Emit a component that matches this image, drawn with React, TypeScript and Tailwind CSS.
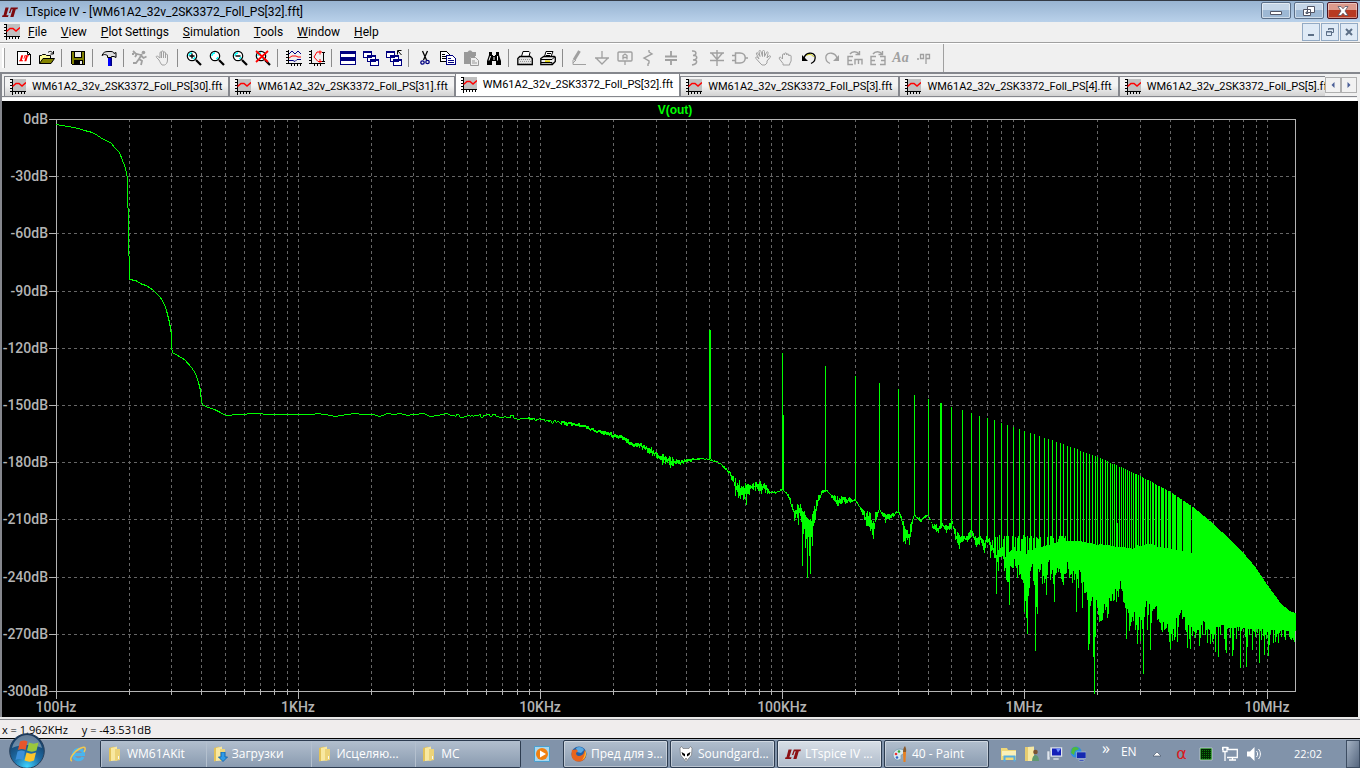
import { useState } from 'react';
import type { ReactNode } from 'react';

// ---------- plot geometry ----------
const LEFT = 56;
const RIGHT = 1295;
const TOP = 119;
const BOTTOM = 691;
const DECADE = 242.2;

const freqX = (hz: number) => Math.floor(LEFT + 0.1 + DECADE * Math.log10(hz / 100));
const dbY = (db: number) => Math.round(TOP + (-db * (BOTTOM - TOP)) / 300);

// repeatable noise, 0..1
const noise = (n: number) => {
  const s = Math.sin(n * 12.9898) * 43758.5453;
  return s - Math.floor(s);
};

const lerp = (points: number[][], x: number, col: number) => {
  for (let i = 1; i < points.length; i++) {
    const a = points[i - 1];
    const b = points[i];
    if (x <= b[0]) return a[col] + ((b[col] - a[col]) * (x - a[0])) / (b[0] - a[0]);
  }
  return points[points.length - 1][col];
};

const startCurve =
  '56,124 61,125 68,126 78,128 84,130 92,132 97,135 103,139 110,142 115,148 119,152 122,160 124,165 126,172 127,179 127,207 128,208 128,255 129,256 129,279 135,280 142,284 146,285 153,290 160,297 164,304 166,310 169,322 171,334 171,346 172,352 177,355 184,359 191,367 195,373 198,382 200,390 201,402 203,405 208,407 214,409 220,412 225,415';

// centre of the thin trace left of the noise
const thin = [
  [225, 415], [237, 414], [255, 413], [268, 414], [312, 414], [316, 413], [324, 414], [334, 416], [340, 415],
  [354, 413], [362, 414], [372, 414], [378, 416], [382, 415], [387, 413], [393, 414], [399, 413], [406, 415],
  [413, 414], [423, 413], [429, 416], [437, 415], [445, 413], [450, 415], [463, 417], [467, 413], [473, 416],
  [480, 415], [500, 416], [520, 418], [540, 420], [560, 422], [580, 425], [600, 431], [610, 433], [625, 439],
  [640, 446],
];

// x, upper edge, lower edge
const band = [
  [640, 444, 447], [650, 449, 453], [660, 455, 460], [670, 459, 464],
  [680, 461, 464], [690, 459, 461], [700, 458, 459], [709, 459, 460], [720, 463, 464], [730, 473, 476],
  [736, 483, 491], [740, 486, 496], [746, 486, 496], [750, 486, 491], [755, 484, 489], [762, 484, 490],
  [770, 491, 494], [776, 492, 493], [782, 489, 490], [788, 495, 497], [792, 505, 511], [795, 509, 519],
  [800, 508, 515], [803, 512, 530], [807, 520, 540], [811, 519, 540], [815, 507, 520], [818, 496, 502],
  [822, 491, 493], [826, 490, 491], [830, 494, 496], [836, 499, 504], [845, 498, 502], [855, 500, 501],
  [860, 507, 509], [865, 514, 522], [870, 518, 527], [873, 524, 537], [876, 513, 519], [879, 509, 510],
  [882, 513, 515], [887, 516, 521], [892, 514, 517], [898, 511, 512], [902, 520, 526], [905, 531, 542],
  [909, 531, 543], [912, 518, 522], [914, 515, 516], [920, 519, 522], [928, 514, 515], [933, 526, 530],
  [938, 527, 533], [941, 523, 525], [946, 527, 532], [952, 521, 526], [955, 532, 539], [959, 538, 546],
  [962, 535, 539], [966, 536, 542], [971, 529, 533], [976, 538, 546], [980, 536, 541], [984, 543, 552],
  [987, 534, 540], [991, 545, 553], [994, 549, 556], [996, 555, 566], [999, 548, 560], [1002, 547, 555],
  [1006, 560, 574], [1009, 552, 575], [1014, 547, 560], [1018, 554, 568], [1021, 550, 570], [1025, 556, 590],
  [1028, 550, 585], [1031, 551, 564], [1035, 548, 590], [1039, 548, 564], [1043, 546, 574], [1048, 545, 562],
  [1053, 544, 572], [1058, 541, 564], [1063, 541, 572], [1067, 541, 562], [1071, 541, 572], [1076, 541, 580],
  [1080, 541, 572], [1084, 542, 584], [1088, 543, 600], [1091, 543, 592], [1095, 544, 612], [1097, 545, 598],
  [1100, 544, 612], [1104, 545, 608], [1109, 545, 604], [1113, 546, 590], [1117, 547, 594], [1120, 547, 586],
  [1124, 547, 596], [1128, 548, 612], [1133, 549, 614], [1137, 545, 628], [1141, 546, 620], [1145, 544, 606],
  [1150, 544, 612], [1154, 545, 604], [1158, 547, 608], [1163, 548, 622], [1168, 548, 632], [1174, 549, 628],
  [1181, 551, 610], [1187, 552, 624], [1193, 553, 630], [1199, 555, 630], [1203, 558, 620], [1209, 565, 630],
  [1215, 575, 628], [1221, 585, 624], [1228, 590, 628], [1240, 600, 627], [1250, 605, 629], [1260, 610, 629],
  [1272, 614, 630], [1295, 614, 631],
];

// long downward spikes, x and lower end
const dips = [
  [670, 468], [662, 465], [746, 505], [743, 500], [735, 496], [761, 494], [802, 566], [807, 578], [810, 574],
  [805, 548], [809, 556], [812, 546], [798, 525], [864, 520], [885, 523], [903, 542], [905, 544], [996, 594],
  [1009, 605], [1006, 580], [1017, 578], [1024, 612], [1025, 601], [1026, 618], [1027, 634], [1035, 651],
  [1036, 607], [1037, 614], [1046, 595], [1054, 602], [1050, 580], [1062, 582], [1076, 612], [1082, 608],
  [1088, 650], [1089, 644], [1093, 657], [1094, 694], [1095, 637], [1099, 622], [1102, 620], [1108, 614],
  [1126, 639], [1129, 631], [1137, 644], [1140, 641], [1143, 674], [1147, 630], [1150, 650], [1161, 630],
  [1169, 642], [1170, 649], [1172, 641], [1174, 640], [1177, 642], [1187, 648], [1190, 649], [1195, 638],
  [1199, 646], [1207, 643], [1210, 644], [1215, 652], [1218, 657], [1225, 650], [1226, 653], [1232, 656],
  [1233, 650], [1240, 668], [1246, 667], [1247, 647], [1252, 650], [1259, 663], [1264, 655], [1268, 656],
  [1269, 645], [1273, 643], [1278, 638], [1290, 639], [1293, 640],
];

// envelope of the harmonic peaks
const peaks = [
  [709, 330], [782, 353], [825, 366], [855, 376], [879, 383], [898, 389], [914, 395], [928, 399], [941, 403],
  [952, 407], [971, 413], [987, 418], [1024, 431], [1060, 443], [1097, 457], [1120, 467], [1140, 476], [1170, 492],
  [1194, 508], [1213, 524], [1229, 539], [1243, 553], [1255, 567], [1267, 585], [1280, 603], [1289, 611], [1295, 613],
];

const buildSpectrum = () => {
  let d = '';
  const column = (x: number, y1: number, y2: number, w = 1) => {
    d += `M${x} ${Math.round(y1)}h${w}V${Math.max(Math.round(y2), Math.round(y1) + 1)}h-${w}z`;
  };
  let prev = 415;
  for (let x = 225; x < 640; x++) {
    let y = lerp(thin, x, 1);
    if (x > 455) y += (noise(Math.floor(x / (x < 520 ? 3 : 1))) - 0.5) * (x < 520 ? 4 : 3.4);
    y = Math.round(y);
    column(x, Math.min(y, prev), Math.max(y, prev) + (x > 600 ? 2 : 1) - (y === prev ? 0 : 1) + (x > 560 ? 1 : 0));
    prev = y;
  }
  for (let x = 640; x <= RIGHT; x++) {
    let upper = lerp(band, x, 1);
    let lower = lerp(band, x, 2);
    // join steep parts with the next column
    const next = lerp(band, x + 1, 1);
    if (next > lower) lower = next;
    const thick = lower - upper;
    if (x < 960) {
      const amp = Math.min(9, thick);
      upper += (noise(x) - 0.6) * amp;
      lower += (noise(x + 71) - 0.5) * amp;
    } else {
      lower += (noise(x + 13) - 0.35) * (x < 990 ? 5 : 20);
      if (x < 1066 && noise(x * 3) > 0.5) upper = 535 + noise(x) * 5;
    }
    column(x, upper, lower);
  }
  dips.forEach(([x, y]) => column(x, lerp(band, x, 1), y));
  for (let k = 1; k <= 262; k++) {
    const x = Math.min(freqX(50000 * k), RIGHT);
    column(x, lerp(peaks, x, 1), lerp(band, x, 2), k === 9 ? 2 : 1);
  }
  for (let x = 1192; x <= RIGHT; x++) column(x, lerp(peaks, x, 1), lerp(band, x, 2));
  column(710, 330, 459);
  column(783, 415, 491);
  column(1063, 499, 545);
  column(1117, 523, 550);
  return d;
};

const spectrum = buildSpectrum();

const minorX: number[] = [];
for (let decade = 100; decade <= 1e7; decade *= 10) {
  for (let m = 1; m < 10; m++) {
    const x = freqX(decade * m);
    if (x > LEFT && x < RIGHT) minorX.push(x);
  }
}
const dbValues = [0, -30, -60, -90, -120, -150, -180, -210, -240, -270, -300];
const decades: [number, string][] = [
  [1e2, '100Hz'], [1e3, '1KHz'], [1e4, '10KHz'], [1e5, '100KHz'], [1e6, '1MHz'], [1e7, '10MHz'],
];

function Plot() {
  return (
    <svg viewBox="2 101 1356 616" className="block h-full w-full bg-black" role="img" aria-label="FFT of V(out)">
      <g shapeRendering="crispEdges">
        <g stroke="#666666" strokeDasharray="3 3" fill="none">
          {minorX.map((x) => <path key={x} d={`M${x + 0.5} ${TOP}V${BOTTOM}`} />)}
          {dbValues.slice(1, -1).map((db) => <path key={db} d={`M${LEFT} ${dbY(db) + 0.5}H${RIGHT}`} />)}
        </g>
        <g stroke="#b4b4b4" fill="none">
          <path d={`M${LEFT + 0.5} ${TOP + 0.5}H${RIGHT + 0.5}V${BOTTOM + 0.5}H${LEFT + 0.5}z`} />
          {dbValues.map((db) => <path key={db} d={`M49 ${dbY(db) + 0.5}H${LEFT}`} />)}
          {minorX.map((x) => <path key={x} d={`M${x + 0.5} 689V695`} />)}
          {decades.map(([hz]) => <path key={hz} d={`M${freqX(hz) + 0.5} ${BOTTOM}V699`} />)}
        </g>
        <polyline points={startCurve} transform="translate(.5 .5)" fill="none" stroke="#00ff00" />
        <path d={spectrum} fill="#00ff00" />
      </g>
      <g fill="#b4b4b4" className="font-['Roboto',sans-serif] text-[14px] font-medium">
        {dbValues.map((db) => <text key={db} x="48" y={dbY(db) + 5} textAnchor="end">{db}dB</text>)}
        {decades.map(([hz, label]) => <text key={hz} x={freqX(hz)} y="712" textAnchor="middle">{label}</text>)}
      </g>
      <text x="675" y="114" textAnchor="middle" fill="#00ff00" className="font-['Liberation_Sans',sans-serif] text-[12px] font-bold">V(out)</text>
    </svg>
  );
}

// ---------- icons ----------
function Ico({ children, size = 'size-4' }: { children: ReactNode; size?: string }) {
  return <svg viewBox="0 0 16 16" fill="none" aria-hidden="true" className={`${size} shrink-0`}>{children}</svg>;
}

const LtMark = ({ color = '#7d0a0f' }) => (
  <path fill={color} d="M3.500 3.500h3.200L4.400 11.200h2.200L6 13H0l.500-1.800h1zM8.800 3.500H16l-.600 1.700h-1.600L11.500 13H8.300l2.400-7.800H9.600L8.300 9H6.900z" />
);
const GraphIcon = () => (
  <Ico>
    <path fill="#c0c0c0" d="M2 0h14v12H2z" />
    <path shapeRendering="crispEdges" stroke="#000" d="M0 .5h2M0 3.500h2M0 6.500h2M0 9.500h2M2.500 0v16M0 12.500h16M5.500 13v2M8.500 13v2M11.500 13v2M14.500 13v2" />
    <path stroke="#f00" strokeWidth="1.500" d="M2.500 7.500 6 4.500l3 0 3 2.500L16 3.500" />
  </Ico>
);
const Glass = ({ children }: { children?: ReactNode }) => (
  <Ico>
    <circle cx="6" cy="6" r="4.700" fill="#fff" stroke="#000" strokeWidth="1.200" />
    <path stroke="#0ff" strokeWidth="1.300" d="M3 6a3 3 0 0 1 3-3M7 9a3 3 0 0 0 2-2" />
    <path stroke="#000" strokeWidth="2.200" d="m10 10 5 5" />
    {children}
  </Ico>
);
const Cascade = ({ arrow = false }) => (
  <Ico>
    <g fill="#fff" stroke="#000080" shapeRendering="crispEdges">
      <path d="M.5 1.500h8v6h-8zM4.500 5.500h8v6h-8zM7.500 9.500h8v6h-8z" />
      <path strokeWidth="2" d="M1 2h8M4 6h9M7 10h9" />
    </g>
    {arrow && <path stroke="#000" d="M11.500 4.500V.5h4M12 1l3.500 4" />}
  </Ico>
);
const GRAY = '#a0a0a0';

const tools: (null | [string, ReactNode])[] = [
  ['New schematic', <Ico><path fill="#fff" stroke="#000" shapeRendering="crispEdges" d="M1.500 1.500h10l3 3v10h-13z" /><path stroke="#000" d="M11.500 1.500v3h3" /><g transform="translate(3 3) scale(.64)"><LtMark color="#f00" /></g></Ico>],
  ['Open', <Ico><path fill="#ffff9c" stroke="#000" d="M.5 13.500v-8h2l1-1h3l1 1h4v3" /><path fill="#848400" stroke="#000" d="M.5 13.500 4 8.500h11.500L12 13.500z" /><path stroke="#000" d="M9 2.500c2-2 4-1 5 1M14.500 1v3h-3" /></Ico>],
  null,
  ['Save', <Ico><g shapeRendering="crispEdges"><path fill="#808000" stroke="#000" d="M1.500 1.500h13v13h-12l-1-1z" /><path fill="#eee" stroke="#000" d="M4.500 1.500h7v6h-7z" /><path fill="#000" d="M4 10h9v5H4z" /><path fill="#eee" d="M10 11h2v3h-2z" /></g></Ico>],
  null,
  ['Control panel', <Ico><path fill="#ddd" stroke="#000" d="M1 5.500C2 2.500 4 1.500 7 1.500h3c2 0 3 1 3 2l2-1v5l-2-1H10.500v1h-4v-2C4 4 2.500 4.500 1 5.500z" /><path fill="#00f" d="M7 8h4v8H7z" /><path fill="#000080" d="M9.500 8H11v8H9.500z" /></Ico>],
  null,
  ['Run', <Ico><circle cx="11.500" cy="2.500" r="1.800" fill={GRAY} /><path stroke={GRAY} strokeWidth="1.800" d="m10 4-3 5 3 2-1 4M7 9l-3 4H1M9 5 5 4 3 7M9.500 6l2 2 3-1.500M1 1l3 3M0 4h2" /></Ico>],
  ['Halt', <Ico><path stroke={GRAY} d="M4 10 1.500 7.500c-1-1 .5-2 1.500-1L5 8V3c0-1.500 1.500-1.500 1.500 0V2c0-1.500 2-1.500 2 0v1c0-1.500 2-1.500 2 0v2c0-1.500 2-1 2 0v5c0 3-1.500 4.500-3 5H7c-1-1-2-3-3-5zM6.500 3v5M8.500 3v5M10.500 4v4" /></Ico>],
  null,
  ['Zoom in', <Glass><path stroke="#000" strokeWidth="1.400" d="M3.500 6h5M6 3.500v5" /></Glass>],
  ['Pan', <Glass />],
  ['Zoom out', <Glass><path stroke="#000" strokeWidth="1.400" d="M3.500 6h5" /></Glass>],
  ['Zoom full extents', <Glass><path stroke="#f00" strokeWidth="1.800" d="m1 1 12 11M13 1 1 12" /></Glass>],
  null,
  ['Autorange', <Ico><path shapeRendering="crispEdges" stroke="#000" d="M2.500 0v14M0 13.500h16M0 1.500h2M0 4.500h2M0 7.500h2M0 10.500h2M5.500 14v2M8.500 14v2M11.500 14v2M14.500 14v2" /><path stroke="#000080" d="m3 4 3-3 3 3 3-3 3 3M3 10.500h4l2 1 2-2h4" /><path stroke="#f00" d="m3 8 3-2h4l2 1h3" /></Ico>],
  ['Axis setup', <Ico><path shapeRendering="crispEdges" stroke="#000" d="M2.500 0v14M0 13.500h16M0 1.500h2M0 4.500h2M0 7.500h2M0 10.500h2M5.500 14v2M8.500 14v2M11.500 14v2M14.500 2v10M13 2.500h3M13 11.500h3" /><path stroke="#f00" d="M13 2H8L5 7l4 4.500h4M11 .5v4M11 9v4" /></Ico>],
  null,
  ['Tile windows', <Ico><g shapeRendering="crispEdges"><path fill="#fff" stroke="#000080" d="M.5 1.500h15v6H.5zM.5 8.500h15v6H.5z" /><path fill="#000080" d="M0 1h16v3H0zM0 8h16v3H0z" /></g></Ico>],
  ['Cascade windows', <Cascade />],
  ['Close all windows', <Cascade arrow />],
  null,
  ['Cut', <Ico><path stroke="#000" strokeWidth="1.300" d="m5.500 1 4 9M10.500 1l-4 9" /><g stroke="#000080" strokeWidth="1.300"><circle cx="5.500" cy="12.500" r="1.700" /><circle cx="10.500" cy="12" r="1.700" /></g></Ico>],
  ['Copy', <Ico><g shapeRendering="crispEdges" fill="#fff"><path stroke="#000" d="M.5 1.500h6l3 3v7h-9zM2 4.500h3M2 6.500h5M2 8.500h5" /><path stroke="#000080" d="M6.500 5.500h6l3 3v6h-9zM8 8.500h3M8 10.500h6M8 12.500h6" /></g></Ico>],
  ['Paste', <Ico><path fill="#999" d="M1 2h3.500L6 .5h2L9.500 2H13v4h-1V4H4v2h3v8H1z" /><path fill="#999" d="M2 3h10v4H7v7H2z" /><path fill="#eee" stroke="#999" d="M7.500 7.500h5l3 3v5h-8zM9 11h3M9 13h5" /></Ico>],
  ['Find', <Ico><path fill="#000" d="M3 2h3v3h1v1h2V5h1V2h3v3l2 6v4h-5v-4H6v4H1v-4l2-6z" /><path stroke="#fff" d="M4.500 6 3 10.500M11.500 6v4.500M8 7v3" /></Ico>],
  null,
  ['Print setup', <Ico><path fill="#fff" stroke="#000" d="M4.500 6.500 6 1.500h6l1 1-1 4" /><path fill="#e4e4e4" stroke="#000" strokeWidth="1.300" d="m.8 8.500 2-2h10.500l2 2v6H.8z" /><path stroke="#999" strokeDasharray="1 1" d="M2 9.500h12M3 11.500h12M2 13.500h12" /></Ico>],
  ['Print', <Ico><path fill="#fff" stroke="#000" d="M4.500 6.500 6 1.500h7l-2 5M7 3.500h4M6 5.500h4" /><path fill="#eee" stroke="#000" strokeWidth="1.300" d="m.8 8.500 3-2h10.500l1 1v4l-3 3H.8z" /><path stroke="#000" d="M1 9.500h11l3-3M1 12.500h11v2" /><path stroke="#e0d000" strokeWidth="1.500" d="M5 11.200h5" /></Ico>],
  null,
  ['Wire', <Ico><path stroke={GRAY} strokeWidth="3" d="M8.500 1 3 10" /><path stroke={GRAY} d="M2 10v4.500h13M2 13l3-3" /></Ico>],
  ['Ground', <Ico><path stroke={GRAY} strokeWidth="1.300" d="M8 1v7M1 8h14M2.500 8.500 8 14l5.500-5.500" /></Ico>],
  ['Label net', <Ico><rect x="1" y="2" width="14" height="9" rx="1" stroke={GRAY} strokeWidth="1.400" /><path stroke={GRAY} strokeWidth="1.300" d="M8 11v4M6 9.500V5.500l2-1.500 2 1.500v4M6 7.500h4" /></Ico>],
  ['Resistor', <Ico><path stroke={GRAY} strokeWidth="1.400" d="M9 0v2l3 2-8 4 5 3v2l-1 1v2" /></Ico>],
  ['Capacitor', <Ico><path stroke={GRAY} strokeWidth="1.800" d="M8 1v5M2 6.500h12M2 10h12M8 10v5" /></Ico>],
  ['Inductor', <Ico><path stroke={GRAY} strokeWidth="1.500" d="M6 1c5-.5 5 4 1 4.500 5-.5 5 4 0 4.500 5-.5 5 4-1 5" /></Ico>],
  ['Diode', <Ico><path stroke={GRAY} strokeWidth="1.400" d="M8 0v16M1 3h14M2.500 3 8 9.500 13.500 3M1 10.500h14" /></Ico>],
  ['Component', <Ico><path stroke={GRAY} strokeWidth="1.500" d="M3.500 3H8c7 0 7 10 0 10H3.500zM0 5.500h3M0 10.500h3M13 8h3" /></Ico>],
  ['Move', <Ico><path stroke={GRAY} d="M5 13 1 8.500C0 7 1.500 6.500 2.500 7.500L4 9 1.500 4c-.5-1.500 1-2 1.500-.5l2 3-1-5c0-1.500 1.500-1.500 2 0l1.500 5V1.500c0-1.500 2-1.500 2 0v5l2-4c.5-1.500 2-.5 1.500 1L12 8l2-2c1.500-1 2 .5 1 1.500L12 11v2l-2 2H7z" /></Ico>],
  ['Drag', <Ico><path stroke={GRAY} d="M5 13.500 1.500 9C.5 7.500 2 6.500 3 7.500L4.500 9V5c0-1.500 2-1.500 2 0V4c0-1.500 2.200-1.500 2.200 0v1c0-1.500 2.200-1.500 2.200 0v1c0-1.200 2.200-1 2.200 0v5l-1.500 3v1H5z" /></Ico>],
  ['Undo', <Ico><path stroke="#000" strokeWidth="1.300" d="M3 8c2-6 9-6 11-2 1 4-1 6-4 7.500" /><path fill="#000" d="M1 5v6h6z" /><path stroke="#cc0" d="M5.500 5.500c3-2 6-1 7 1.500" /></Ico>],
  ['Redo', <Ico><path stroke={GRAY} strokeWidth="1.300" d="M13 8C11 2 4 2 2 6c-1 4 1 6 4 7.500" /><path fill={GRAY} d="M15 5v6H9z" /></Ico>],
  ['Rotate', <Ico><path stroke={GRAY} strokeWidth="1.400" d="M6 6.500H1v8h5M1 10.500h4M8 14.500v-5h7v5M11.500 10v4M3 4c2-3 7-3 9 0M12.500 1v3.500h-4" /></Ico>],
  ['Mirror', <Ico><path stroke={GRAY} strokeWidth="1.400" d="M6 6.500H1v8h5M1 10.500h4M10 6.500h5v8h-5M15 10.500h-4M3 4c2-3 7-3 9 0M12.500 1v3.500h-4" /></Ico>],
  ['Text', <span className="font-['Liberation_Serif',serif] text-[14px] leading-4 font-bold italic text-[#a0a0a0]">Aa</span>],
  ['SPICE directive', <Ico><path stroke={GRAY} strokeWidth="1.300" d="M4.500 4.500h3v4h-3zM10 14V4.500h3.500v4H10M1 9h2" /></Ico>],
];

const Folder = () => (
  <Ico>
    <path fill="#e2c25a" d="M2 2 7 .5V14L2 15.500z" />
    <path fill="#f8e8a0" d="m4 2 6-1.500v14L4 15z" />
    <path fill="#ecd378" d="M8 3h5v11l-5 1z" />
    <path fill="#f8f8f0" d="M11 10h1v3h-1z" />
  </Ico>
);

const folderTasks: [string, ReactNode][] = [
  ['WM61AKit', <Folder />],
  ['Загрузки', <span className="relative flex"><Folder /><svg viewBox="0 0 10 10" className="absolute right-0 bottom-0 size-[10px]"><path fill="#2e9be8" stroke="#1468b0" d="M3 0h4v5h2.500L5 9.500.5 5H3z" /></svg></span>],
  ['Исцеляю...', <Folder />],
  ['MC', <Folder />],
];

const appTasks: [string, ReactNode][] = [
  ['Пред для э...', <Ico><circle cx="8" cy="8" r="7.500" fill="#1f5fa8" /><path fill="#5aa8e0" d="M5 2c3-2 7-1 8 2l-3 3-4-1z" /><path fill="#e8641b" d="M1 3c0 1 1 1 2 1 2-1 3 0 4 1L5 7c0 3 3 4 6 2 2-1 2-3 2-5 3 4 2 9-2 11C6 17 0 14 .5 8z" /><path fill="#ffb52c" d="M14 4c2 4 1 8-3 10 2-3 3-5 3-10z" /></Ico>],
  ['Soundgard...', <Ico><path fill="#fff" stroke="#555" strokeWidth=".5" d="M2 2 3.500.5 5 2.500h6L12.500.5 14 2l-.5 7L8 15.500 2.500 9z" /><path fill="#000" d="m3.500 6 3.500 2v2.500L4.500 9zM12.500 6 9 8v2.500L11.500 9zM7 12.500h2L8 14z" /></Ico>],
  ['LTspice IV ...', <Ico><LtMark color="#8c1014" /></Ico>],
  ['40 - Paint', <Ico><path fill="#d7e8ef" stroke="#7f9fb0" d="M1 9c0-4 4-6 7-6s5 2 4 4-3 1-3 3 1 3-2 4-6-2-6-5z" /><circle cx="4" cy="8" r="1.300" fill="#e33" /><circle cx="7" cy="5.500" r="1.300" fill="#3a3" /><circle cx="5" cy="11.500" r="1.300" fill="#36c" /><path fill="#e8801f" d="M11 6h3l-.5 10h-2z" /><path fill="#8a5a2c" d="M11 6c0-3 1-5 2-6 1 2 1.500 4 1 6z" /></Ico>],
];

const menus = ['File', 'View', 'Plot Settings', 'Simulation', 'Tools', 'Window', 'Help'];
const tabs = ['[30]', '[31]', '[32]', '[3]', '[4]', '[5]'];

export default function App() {
  const [active, setActive] = useState('[32]');

  return (
    <div className="flex min-h-screen flex-col bg-[#f0f0f0] font-['Open_Sans','Noto_Sans',sans-serif] text-[11px] text-black">
      {/* title bar */}
      <header className="flex h-[22px] shrink-0 items-center border-t border-[#333a45] bg-linear-to-b from-[#98b4d2] to-[#b9d1ea] pl-[2px] pr-[2px]">
        <Ico><LtMark /></Ico>
        <h1 className="ml-2 flex-1 font-['Roboto',sans-serif] text-[12px] leading-4">LTspice IV - [WM61A2_32v_2SK3372_Foll_PS[32].fft]</h1>
        <div className="flex gap-[3px] self-start pt-px">
          <button aria-label="Minimize" className="flex h-[17px] w-[30px] items-center justify-center rounded-[2px] border border-[#5b6f88] bg-linear-to-b from-[#c5d6e8] from-50% to-[#9db8d4] to-50% inset-ring inset-ring-white/50">
            <svg viewBox="0 0 12 12" className="size-3"><path fill="#fff" stroke="#535666" d="M.5 6.500h11v3H.5z" /></svg>
          </button>
          <button aria-label="Restore" className="flex h-[17px] w-[30px] items-center justify-center rounded-[2px] border border-[#5b6f88] bg-linear-to-b from-[#c5d6e8] from-50% to-[#9db8d4] to-50% inset-ring inset-ring-white/50">
            <svg viewBox="0 0 12 12" className="size-3"><path fill="#fff" stroke="#535666" d="M4.500 1.500h7v6h-7zM.5 4.500h7v6h-7z" /><path fill="#9db8d4" stroke="#535666" d="M3 7h2v1.500H3z" /></svg>
          </button>
          <button aria-label="Close" className="flex h-[17px] w-[31px] items-center justify-center rounded-[2px] border border-[#4a1420] bg-linear-to-b from-[#dc9a8c] from-50% to-[#b83a22] to-50% inset-ring inset-ring-white/40">
            <svg viewBox="0 0 12 12" className="size-3"><path fill="#fff" stroke="#535666" strokeWidth=".8" d="M1 1.500h3l2 2.300 2-2.300h3L8 6l3 4.500H8L6 8.200 4 10.500H1L4 6z" /></svg>
          </button>
        </div>
      </header>

      {/* menu */}
      <nav className="flex h-[21px] shrink-0 items-center border-b border-[#a0a0a0] pl-1 pr-[2px]">
        <GraphIcon />
        <ul className="flex flex-1 gap-[14px] pl-[8px] font-['Roboto',sans-serif] text-[12px] leading-4">
          {menus.map((m) => (
            <li key={m}><button><span className="underline">{m[0]}</span>{m.slice(1)}</button></li>
          ))}
        </ul>
        <div className="flex gap-px">
          <button aria-label="Minimize document" className="flex h-[18px] w-[18px] items-center justify-center border border-[#93aac4] bg-[#dfeaf6]"><svg viewBox="0 0 10 10" className="size-[10px]"><path fill="#5c6f87" d="M2 7h6v2H2z" /></svg></button>
          <button aria-label="Restore document" className="flex h-[18px] w-[18px] items-center justify-center border border-[#93aac4] bg-[#dfeaf6]"><svg viewBox="0 0 10 10" className="size-[10px]"><path fill="none" stroke="#5c6f87" d="M3.500 3V1.500h5v4H7M1.500 4.500h5v4h-5zM1 5h6M3 2h6" /></svg></button>
          <button aria-label="Close document" className="flex h-[18px] w-[18px] items-center justify-center border border-[#93aac4] bg-[#dfeaf6]"><svg viewBox="0 0 10 10" className="size-[10px]"><path stroke="#5c6f87" strokeWidth="2" d="m2 2 6 6M8 2 2 8" /></svg></button>
        </div>
      </nav>

      {/* toolbar */}
      <div className="flex h-[31px] shrink-0 border-t border-b-2 border-t-white border-b-[#85878d]">
        <div className="my-1 ml-[2px] w-[3px] border-r border-[#a0a0a0] bg-white" />
        <div className="flex items-center border-r border-[#a0a0a0] pl-[7px] pr-[8px]">
          {tools.map((t, i) =>
            t ? (
              <button key={t[0]} aria-label={t[0]} className="flex h-[22px] w-[23px] items-center justify-center">{t[1]}</button>
            ) : (
              <span key={i} className="ml-[3px] mr-1 h-[18px] w-px bg-[#8c8c8c]" />
            ),
          )}
        </div>
      </div>

      {/* document tabs */}
      <div className="flex h-[27px] shrink-0 flex-col border-l-2 border-[#85878d] pr-[3px]">
        <div className="flex h-[23px] items-end overflow-hidden border-b border-[#85878d] pl-[2px]">
          <div role="tablist" className="flex min-w-0 flex-1 items-end overflow-hidden">
            {tabs.map((t) => (
              <button
                key={t}
                role="tab"
                aria-selected={t === active}
                onClick={() => setActive(t)}
                className={`flex shrink-0 items-center gap-[6px] border-l border-r border-t border-[#85878d] pl-[5px] pr-[6px] font-['Roboto',sans-serif] text-[11px] leading-4 whitespace-nowrap ${
                  t === active ? 'h-[23px] bg-white' : 'h-[20px] bg-linear-to-b from-[#f3f3f3] from-45% to-[#d2d2d2]'
                }`}
              >
                <GraphIcon />
                WM61A2_32v_2SK3372_Foll_PS{t}.fft
              </button>
            ))}
          </div>
          <div className="flex self-center">
            <button aria-label="Scroll tabs left" className="flex h-4 w-4 items-center justify-center border border-[#b0b0b0] bg-[#f2f2f2]"><svg viewBox="0 0 6 6" className="size-[6px]"><path fill="#4a5f97" d="M4.500 0v6l-3-3z" /></svg></button>
            <button aria-label="Scroll tabs right" className="flex h-4 w-4 items-center justify-center border border-[#b0b0b0] bg-[#f2f2f2]"><svg viewBox="0 0 6 6" className="size-[6px]"><path fill="#4a5f97" d="M1.500 0v6l3-3z" /></svg></button>
          </div>
        </div>
        <div className="flex-1 border-t border-[#f0f0f0] bg-white" />
      </div>

      <main className="min-h-0 flex-1 basis-0 border-l-2 border-r-2 border-l-[#85878d] border-r-[#f0f0f0] bg-black">
        <Plot />
      </main>

      {/* cursor readout */}
      <footer className="flex h-[22px] shrink-0 flex-col border-t-2 border-b border-t-[#e8e8e8] border-b-black bg-[#f0eded]">
        <p className="flex flex-1 gap-[14px] border-t border-[#85878d] pl-[2px] text-[11px] leading-5">
          <span>x = 1.962KHz</span>
          <span>y = -43.531dB</span>
        </p>
      </footer>

      {/* taskbar */}
      <div className="relative flex h-[29px] shrink-0 items-stretch border-t border-[#a9b5c5] bg-[#8193aa] text-[12px] text-white">
        <button aria-label="Start" className="absolute -top-[7px] left-[9px] size-9">
          <svg viewBox="0 0 36 36" className="size-9">
            <defs>
              <radialGradient id="orb" cx=".5" cy=".95" r=".9">
                <stop offset="0" stopColor="#3fd4ff" />
                <stop offset=".45" stopColor="#1d6ca5" />
                <stop offset="1" stopColor="#14365c" />
              </radialGradient>
            </defs>
            <circle cx="18" cy="18" r="17.300" fill="url(#orb)" stroke="#28405c" />
            <path fill="#fff" opacity=".35" d="M3 15C5 6 12 2 18 2s13 4 15 13c-8-4-22-4-30 0z" />
            <path fill="#e8562a" d="M11 8.500c3-1.500 5-1.500 7.500 0L16.500 17c-2.500-1.500-4.500-1.500-7.500 0z" />
            <path fill="#9bc83c" d="M20 9.500c3 1.500 6 1.500 9.500 0L27.500 17.500c-3 1.500-6 1.500-9.500 0z" />
            <path fill="#3c8fd8" d="M8.500 18.500c3-1.500 5-1.500 7.500 0L14 27c-2.500-1.500-4.500-1.500-7.500 0z" />
            <path fill="#fbc52c" d="M17.500 19.500c3 1.500 6 1.500 9.500 0L25 27.500c-3 1.500-6 1.500-9.500 0z" />
          </svg>
        </button>
        <button aria-label="Internet Explorer" className="ml-[55px] flex w-[45px] items-center justify-center">
          <svg viewBox="0 0 18 18" className="size-[18px]" fill="none">
            <path stroke="#49b5ee" strokeWidth="3" d="M4.500 9.500h10c0-7-10-7-10 0s8 6 9.500 2.500" />
            <path stroke="#f0c850" strokeWidth="1.500" d="M3 16c-4-1 2-10 9-13 5-2 5 1 3 4" />
          </svg>
        </button>
        <div className="flex w-[421px] rounded-[2px] border border-[#2d3c50]">
          {folderTasks.map(([name, icon]) => (
            <button key={name} className="flex min-w-0 flex-1 items-center gap-1 border-l border-[#b4c0ce] bg-linear-to-b from-[#b2bfce] to-[#8a9bb0] pl-[5px] whitespace-nowrap">
              {icon}
              {name}
            </button>
          ))}
        </div>
        <button aria-label="Media player" className="flex w-[42px] items-center justify-center">
          <Ico><path fill="#a8d8f0" stroke="#4aa0d0" d="M.5.5h15v15H.5z" /><circle cx="8" cy="8" r="6" fill="#f08010" /><path fill="#fff" d="M6 4.500v7L12 8z" /></Ico>
        </button>
        <div className="flex gap-[2px]">
          {appTasks.map(([name, icon]) => (
            <button
              key={name}
              className={`flex w-[105px] items-center gap-1 rounded-[2px] border border-[#2d3c50] pl-[7px] whitespace-nowrap inset-ring inset-ring-white/40 bg-linear-to-b ${
                name.startsWith('LTspice') ? 'from-[#d8dfe7] to-[#b0bccb]' : 'from-[#b2bfce] to-[#8a9bb0]'
              }`}
            >
              {icon}
              {name}
            </button>
          ))}
        </div>
        <div className="flex flex-1 items-center">
          <div className="flex gap-[7px] pl-3">
            <button aria-label="Explorer"><Ico><path fill="#f0d878" d="M0 2h6l1 2h8v10H0z" /><path fill="#fbf0b8" d="M1 5h14v5H1z" /><path fill="none" stroke="#56aee0" strokeWidth="2" d="M3.500 15.500V10.500h10v5" /></Ico></button>
            <button aria-label="User folder"><Ico><path fill="#e6cc70" d="M1 1h6v14H1z" /><path fill="#f6e8a4" d="m4 1 6-.5V15H4z" /><circle cx="11.500" cy="6" r="2.300" fill="#7a5230" /><path fill="#5f9870" d="M8 15c0-8 7-8 7 0z" /></Ico></button>
            <button aria-label="Computer"><Ico><path fill="#dfe6ee" stroke="#8592a5" strokeWidth=".6" d="M3 1h12.500v10H3zM0 5h3v9H0zM6 12h6v2H6z" /><path fill="#1420b8" d="M5 2.500h9v7H5z" /><path fill="#6f90ff" d="M9 2.500h5l-3 4z" /></Ico></button>
            <button aria-label="Network places"><Ico><circle cx="6" cy="6" r="5.500" fill="#2f8fe0" /><path fill="#4cba3c" d="M2 2.500C5 0 8 1 9 3L5 5 4 9 1 7z" /><path fill="#1528b0" stroke="#bcd" strokeWidth=".6" d="M6.500 6H16v6.500H6.500zM9 13.500h5v1.500H9z" /></Ico></button>
          </div>
          <button aria-label="More toolbar items" className="ml-[16px] -mt-3 text-[16px] leading-4">»</button>
          <button className="ml-[11px] -mt-1">EN</button>
          <button aria-label="Show hidden icons" className="ml-[15px]"><svg viewBox="0 0 10 6" className="h-[6px] w-[10px]"><path fill="#fff" stroke="#3c4c60" strokeWidth=".6" d="m5 1 4 4H1z" /></svg></button>
          <div className="flex items-center gap-2 pl-3">
            <span className="w-4 text-center font-['DejaVu_Sans',sans-serif] text-[16px] leading-4 text-[#d81a20]">α</span>
            <Ico>
              <path fill="#0a7a0a" stroke="#dfe8df" strokeWidth=".6" d="M2 2h12v12H2z" />
              <path stroke="#022802" shapeRendering="crispEdges" d="M3 3.500h10M3 5.500h10M3 7.500h10M3 9.500h10M3 11.500h10M3.500 3v10M5.500 3v10M7.500 3v10M9.500 3v10M11.500 3v10" />
            </Ico>
            <Ico><path stroke="#fff" strokeWidth="1.300" d="M6 3.500h9.300v8H5M7 14h7M10.500 12v2M1 1.500h4v4H1zM3 6v9M0 1v3M6 1v3" /></Ico>
            <Ico><path fill="#fff" d="M1 5.500h3L8.500 1v14L4 10.500H1z" /><path stroke="#fff" d="M10.500 5c1.500 2 1.500 4 0 6M12.500 3c2.500 3 2.500 7 0 10" /></Ico>
          </div>
          <time className="ml-auto mr-6 text-[11px]">22:02</time>
        </div>
        <button aria-label="Show desktop" className="w-[14px] border border-[#3d4d62] bg-linear-to-br from-[#a5b3c4] to-[#56677f]" />
      </div>
    </div>
  );
}
